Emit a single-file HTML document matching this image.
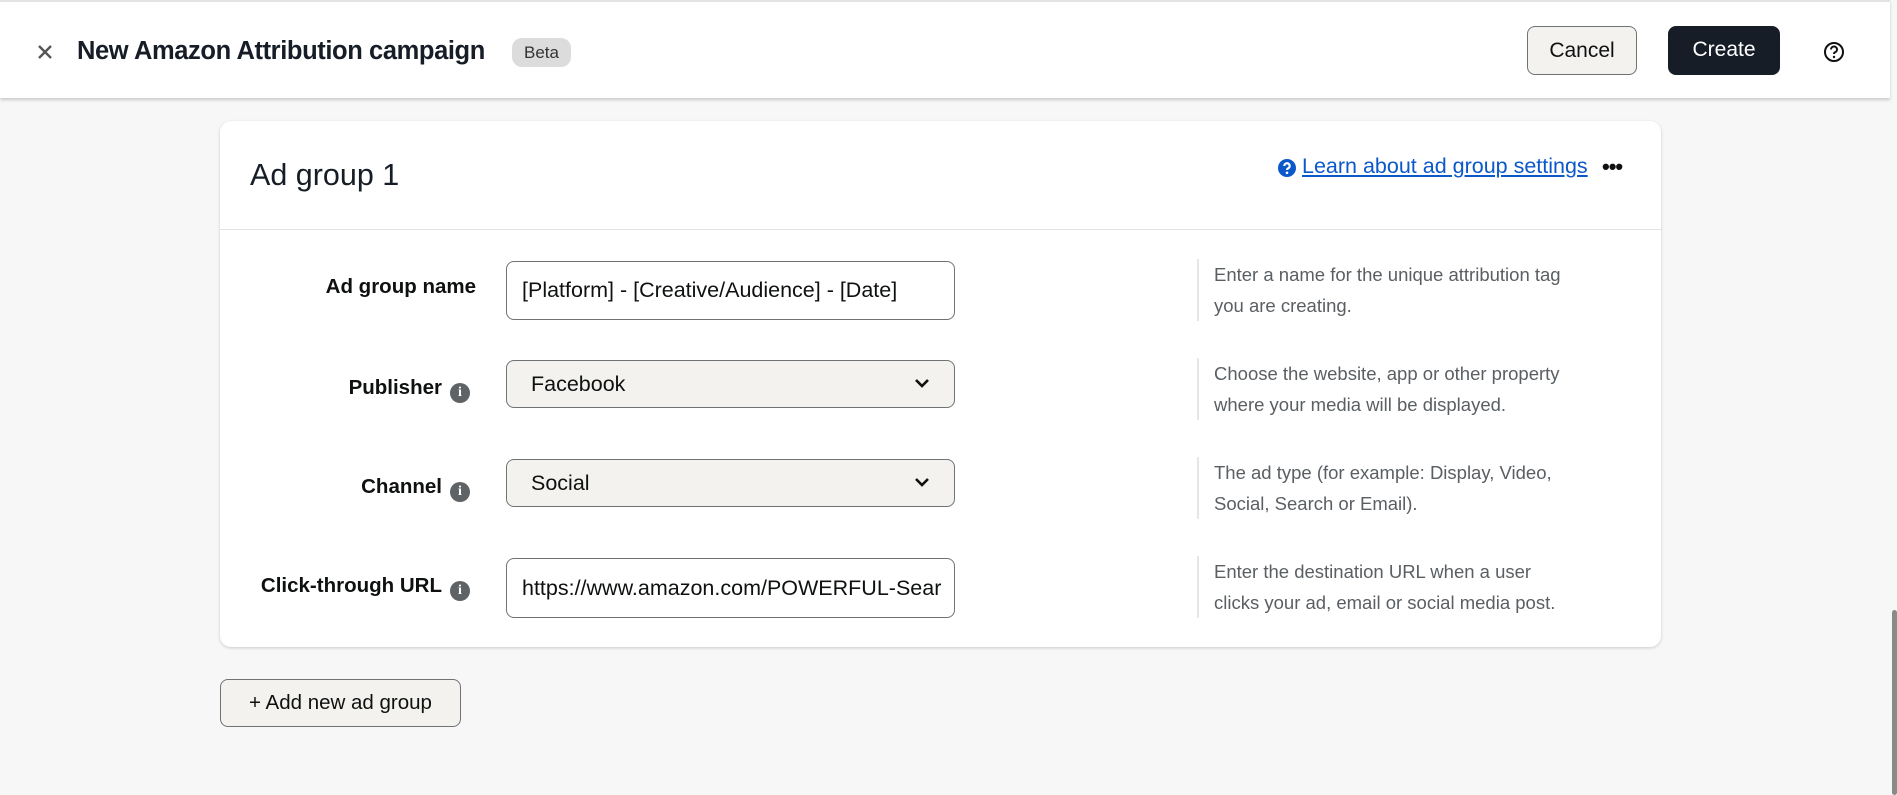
<!DOCTYPE html>
<html><head><meta charset="utf-8"><style>
*{box-sizing:border-box;margin:0;padding:0}
body{width:1897px;height:795px;background:#f7f7f7;font-family:"Liberation Sans",sans-serif;color:#0f1111;position:relative;overflow:hidden}
.hdr{position:absolute;left:0;top:0;width:1890px;height:98px;background:#fff;border-top:2px solid #e3e3e3;box-shadow:0 2px 3px rgba(0,0,0,.18)}
.abs{position:absolute}
.title{left:77px;top:35px;font-size:25.5px;font-weight:bold;letter-spacing:-0.4px;color:#161d26}
.beta{left:512px;top:36px;width:59px;height:29px;border-radius:10px;background:#dcdcdc;font-size:17px;line-height:29px;text-align:center;color:#333}
.btn{height:49px;border-radius:8px;font-size:21px;line-height:47px;text-align:center}
.card{left:220px;top:121px;width:1441px;height:526px;background:#fff;border-radius:11px;box-shadow:0 1px 3px rgba(0,0,0,.18)}
.lbl{right:0;font-size:20.5px;font-weight:bold;color:#0f1111;text-align:right}
.inp{left:506px;width:449px;border:1px solid #6f7373;border-radius:8px;font-size:21.5px;color:#0f1111;padding-left:15px}
.sel{background:#f3f2ef;padding-left:24px}
.help{left:1197px;border-left:2px solid #e6e6e6;padding-left:15px;font-size:18.5px;line-height:31px;color:#5a5f63;white-space:nowrap}
.info{display:inline-block;width:20px;height:20px;border-radius:50%;background:#5f6365;color:#fff;font:bold 14px/20px "Liberation Serif",serif;text-align:center;vertical-align:-2px;margin-left:8px}
</style></head><body>
<div class="hdr">
 <svg class="abs" style="left:37px;top:42px" width="16" height="16" viewBox="0 0 16 16"><path d="M2 2L14 14M14 2L2 14" stroke="#555" stroke-width="2.4"/></svg>
 <div class="abs title">New Amazon Attribution campaign</div>
 <div class="abs beta">Beta</div>
 <div class="abs btn" style="left:1527px;top:24px;width:110px;border:1px solid #6f7373;background:#f3f2ef">Cancel</div>
 <div class="abs btn" style="left:1668px;top:24px;width:112px;background:#161d26;color:#fff">Create</div>
 <svg class="abs" style="left:1823px;top:39px" width="22" height="22" viewBox="0 0 22 22"><circle cx="11" cy="11" r="9" fill="none" stroke="#111" stroke-width="2"/><path d="M8 8.5a3 3 0 1 1 4 2.8c-.8.4-1 .9-1 1.7" fill="none" stroke="#111" stroke-width="2"/><circle cx="11" cy="16" r="1.2" fill="#111"/></svg>
</div>
<div class="abs card">
 <div class="abs" style="left:30px;top:37px;font-size:30.5px;color:#161d26">Ad group 1</div>
 <svg class="abs" style="left:1058px;top:38px" width="18" height="18" viewBox="0 0 18 18"><circle cx="9" cy="9" r="9" fill="#0a58c9"/><path d="M6.3 7a2.7 2.7 0 1 1 3.8 2.4c-.8.4-1.1.8-1.1 1.6" fill="none" stroke="#fff" stroke-width="2.2"/><circle cx="9" cy="13.8" r="1.3" fill="#fff"/></svg>
 <div class="abs" style="left:1082px;top:33px;font-size:21.5px;color:#0a58c9;text-decoration:underline;white-space:nowrap">Learn about ad group settings</div>
 <div class="abs" style="left:1382px;top:33px;font-size:22px;font-weight:bold;letter-spacing:-1px">•••</div>
 <div class="abs" style="left:0;top:108px;width:1441px;height:1px;background:#e3e3e3"></div>

 <div class="abs" style="left:0;width:256px;top:154px"><div class="abs lbl" style="white-space:nowrap">Ad group name</div></div>
 <div class="abs inp" style="top:140px;height:59px;line-height:57px;left:286px;white-space:nowrap">[Platform] - [Creative/Audience] - [Date]</div>
 <div class="abs help" style="top:138px;left:977px">Enter a name for the unique attribution tag<br>you are creating.</div>

 <div class="abs" style="left:0;width:250px;top:255px"><div class="abs lbl" style="white-space:nowrap">Publisher<span class="info">i</span></div></div>
 <div class="abs inp sel" style="top:239px;height:48px;line-height:46px;left:286px">Facebook<svg class="abs" style="right:24px;top:17px" width="16" height="11" viewBox="0 0 16 11"><path d="M2 2l6 6 6-6" fill="none" stroke="#111" stroke-width="2.6"/></svg></div>
 <div class="abs help" style="top:237px;left:977px">Choose the website, app or other property<br>where your media will be displayed.</div>

 <div class="abs" style="left:0;width:250px;top:354px"><div class="abs lbl" style="white-space:nowrap">Channel<span class="info">i</span></div></div>
 <div class="abs inp sel" style="top:338px;height:48px;line-height:46px;left:286px">Social<svg class="abs" style="right:24px;top:17px" width="16" height="11" viewBox="0 0 16 11"><path d="M2 2l6 6 6-6" fill="none" stroke="#111" stroke-width="2.6"/></svg></div>
 <div class="abs help" style="top:336px;left:977px">The ad type (for example: Display, Video,<br>Social, Search or Email).</div>

 <div class="abs" style="left:0;width:250px;top:453px"><div class="abs lbl" style="white-space:nowrap">Click-through URL<span class="info">i</span></div></div>
 <div class="abs inp" style="top:437px;height:60px;line-height:58px;left:286px;overflow:hidden;white-space:nowrap">https://www.amazon.com/POWERFUL-Sear</div>
 <div class="abs help" style="top:435px;left:977px">Enter the destination URL when a user<br>clicks your ad, email or social media post.</div>
</div>
<div class="abs btn" style="left:220px;top:679px;width:241px;height:48px;line-height:46px;border:1px solid #6f7373;background:#f3f2ef;font-size:20.5px">+ Add new ad group</div>
<div class="abs" style="left:1892px;top:610px;width:5px;height:185px;background:#8a8a8a;border-radius:3px"></div>
</body></html>
